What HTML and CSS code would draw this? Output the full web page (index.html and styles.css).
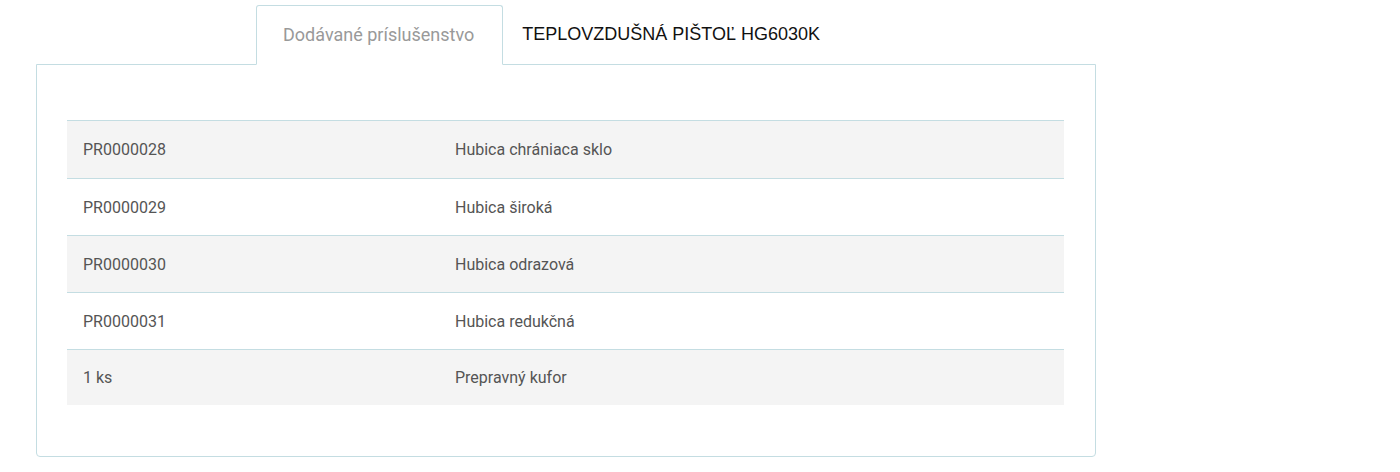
FILE: index.html
```html
<!DOCTYPE html>
<html lang="sk">
<head>
    <meta charset="UTF-8">
    <meta name="viewport" content="width=device-width, initial-scale=1.0">
    <title>Teplovzdušná pištoľ HG6030K</title>
    <link rel="stylesheet" href="styles.css">
</head>
<body>
    <div class="product-tabs">
        <ul class="tab-list">
            <li class="tab active">Dodávané príslušenstvo</li>
            <li class="tab title">TEPLOVZDUŠNÁ PIŠTOĽ HG6030K</li>
        </ul>
        <div class="tab-panel">
            <table class="accessories">
                <colgroup>
                    <col class="col-code">
                    <col>
                </colgroup>
                <tr>
                    <td>PR0000028</td>
                    <td>Hubica chrániaca sklo</td>
                </tr>
                <tr>
                    <td>PR0000029</td>
                    <td>Hubica široká</td>
                </tr>
                <tr>
                    <td>PR0000030</td>
                    <td>Hubica odrazová</td>
                </tr>
                <tr>
                    <td>PR0000031</td>
                    <td>Hubica redukčná</td>
                </tr>
                <tr>
                    <td>1 ks</td>
                    <td>Prepravný kufor</td>
                </tr>
            </table>
        </div>
    </div>
</body>
</html>
```

FILE: styles.css
```css
/* General styles */
body {
    margin: 0;
    padding: 5px 0 0 36px;
    background: #fff;
    font-family: Roboto, "Noto Sans", sans-serif;
    color: #555;
}
.product-tabs {
    width: 1060px;
}

/* Tabs */
.tab-list {
    display: flex;
    list-style: none;
    margin: 0 0 -1px 220px;
    padding: 0;
}
.tab {
    height: 58px;
    line-height: 58px;
}
.tab.active {
    position: relative;
    z-index: 1;
    padding: 0 28px 0 26px;
    border: 1px solid #c4dde2;
    border-bottom: 1px solid #fff;
    border-radius: 3px 3px 0 0;
    background: #fff;
    font-size: 18px;
    color: #999;
}
.tab.title {
    padding-left: 19px;
    font-family: "Liberation Sans", Arial, sans-serif;
    font-size: 18px;
    color: #111;
}

/* Panel */
.tab-panel {
    border: 1px solid #c4dde2;
    border-radius: 0 0 4px 4px;
    padding: 55px 31px 51px 30px;
}
.accessories {
    width: 100%;
    table-layout: fixed;
    border-collapse: collapse;
    font-size: 16px;
}
.accessories .col-code {
    width: 372px;
}
.accessories td {
    height: 56px;
    padding: 0 16px;
    border-top: 1px solid #c4dde2;
}
.accessories tr:first-child td {
    height: 57px;
}
.accessories tr:last-child td {
    height: 55px;
}
.accessories tr:nth-child(odd) {
    background: #f4f4f4;
}
```
